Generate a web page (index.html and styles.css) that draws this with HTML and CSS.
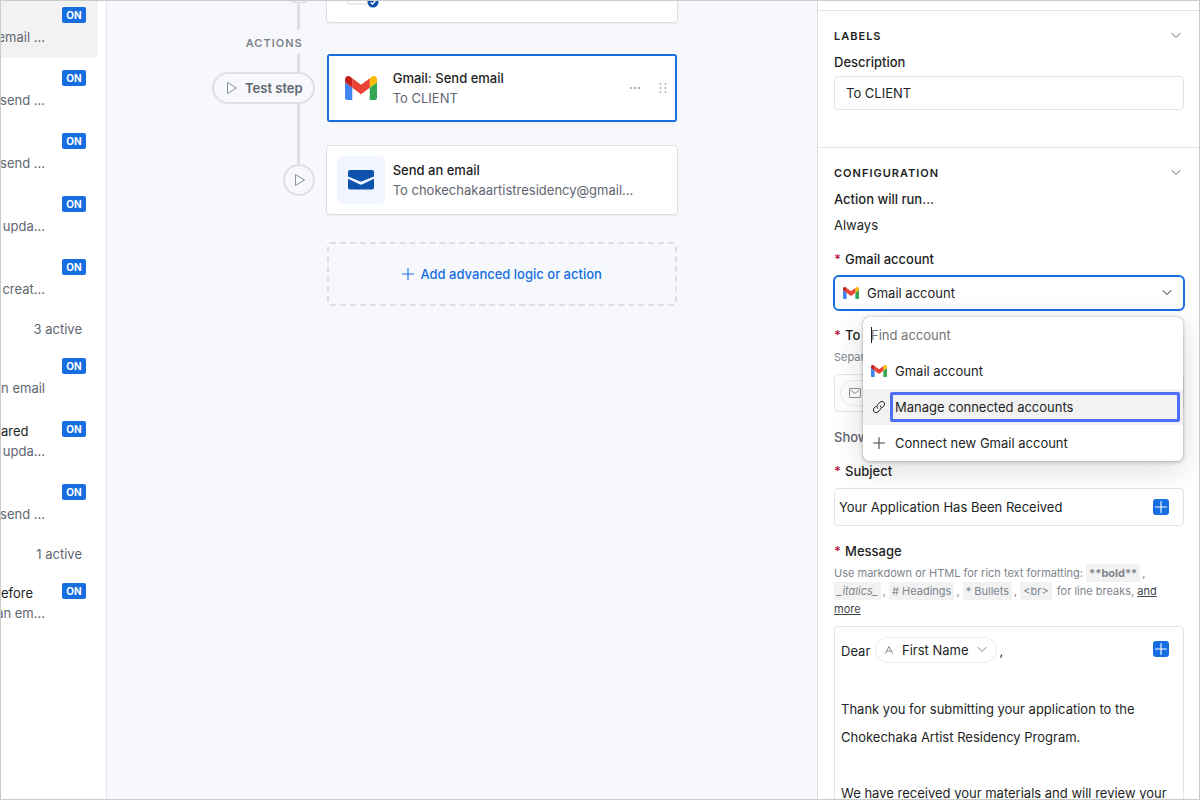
FILE: index.html
```html
<!DOCTYPE html>
<html lang="en">
<head>
    <meta charset="utf-8">
    <title>Automations</title>
    <meta name="viewport" content="width=device-width, initial-scale=1.0">
    <link rel="stylesheet" href="styles.css">
</head>
<body>
    <!-- shared icons -->
    <svg class="sprite" aria-hidden="true">
        <symbol id="gmail" viewBox="52 42 88 66">
            <path fill="#4285f4" d="M58 108h14V74L52 59v43c0 3.32 2.69 6 6 6"/>
            <path fill="#34a853" d="M120 108h14c3.32 0 6-2.69 6-6V59l-20 15"/>
            <path fill="#fbbc04" d="M120 48v26l20-15v-8c0-7.42-8.47-11.65-14.4-7.2"/>
            <path fill="#ea4335" d="M72 74V48l24 18 24-18v26L96 92"/>
            <path fill="#c5221f" d="M52 51v8l20 15V48l-5.6-4.2c-5.94-4.45-14.4-.22-14.4 7.2"/>
        </symbol>
        <symbol id="chevron" viewBox="0 0 12 12">
            <path d="M2 3.500l4 4 4-4" fill="none" stroke="currentColor" stroke-linecap="round" stroke-linejoin="round"/>
        </symbol>
        <symbol id="plus" viewBox="0 0 14 14">
            <path d="M7 1.500v11M1.500 7h11" fill="none" stroke="currentColor" stroke-width="1.1" stroke-linecap="round"/>
        </symbol>
        <symbol id="play" viewBox="0 0 14 14">
            <path d="M3.500 1.500v11l9-5.500z" fill="none" stroke="currentColor" stroke-width=".9" stroke-linejoin="round"/>
        </symbol>
    </svg>

    <div class="app">
        <nav class="sidebar">
            <ul class="list">
                <li class="item selected"><span class="badge">ON</span><p class="desc">email ...</p></li>
                <li class="item"><span class="badge">ON</span><p class="desc">send ...</p></li>
                <li class="item"><span class="badge">ON</span><p class="desc">send ...</p></li>
                <li class="item"><span class="badge">ON</span><p class="desc">upda...</p></li>
                <li class="item"><span class="badge">ON</span><p class="desc">creat...</p></li>
            </ul>
            <p class="count">3 active</p>
            <ul class="list">
                <li class="item"><span class="badge">ON</span><p class="desc">an email</p></li>
                <li class="item"><p class="name">ared</p><span class="badge">ON</span><p class="desc">upda...</p></li>
                <li class="item"><span class="badge">ON</span><p class="desc">send ...</p></li>
            </ul>
            <p class="count">1 active</p>
            <ul class="list">
                <li class="item"><p class="name name-cut">before</p><span class="badge">ON</span><p class="desc">an em...</p></li>
            </ul>
        </nav>

        <main class="canvas">
            <div class="rail">
                <button class="round" type="button" aria-label="Test trigger"><svg class="icon14"><use href="#play"/></svg></button>
                <span class="line line-top"></span>
                <span class="rail-label">ACTIONS</span>
                <span class="line line-short"></span>
                <button class="pill" type="button"><svg class="icon14"><use href="#play"/></svg><span>Test step</span></button>
                <span class="line line-long"></span>
                <button class="round" type="button" aria-label="Test this step"><svg class="icon14"><use href="#play"/></svg></button>
            </div>

            <div class="steps">
                <div class="card trigger">
                    <svg class="tile-icon" viewBox="0 0 48 48">
                        <rect x="11" y="12" width="26" height="28" rx="2" fill="#fff" stroke="#d5d7db"/>
                        <circle cx="36" cy="38" r="5.500" fill="#0d52ac"/>
                        <path d="M33.500 38.500l2 1.500 3-3.500" fill="none" stroke="#fff" stroke-width="1.500"/>
                    </svg>
                </div>

                <div class="card active">
                    <div class="tile"><svg class="gmail-big"><use href="#gmail"/></svg></div>
                    <div class="card-text">
                        <h3>Gmail: Send email</h3>
                        <p>To CLIENT</p>
                    </div>
                    <button class="plain" type="button" aria-label="More options">
                        <svg class="icon14" viewBox="0 0 14 14" fill="#8f929b"><circle cx="3" cy="7" r="1"/><circle cx="7" cy="7" r="1"/><circle cx="11" cy="7" r="1"/></svg>
                    </button>
                    <button class="plain" type="button" aria-label="Drag step">
                        <svg class="icon14" viewBox="0 0 14 14" fill="#a5a8af"><circle cx="4.500" cy="3" r=".9"/><circle cx="9.500" cy="3" r=".9"/><circle cx="4.500" cy="7" r=".9"/><circle cx="9.500" cy="7" r=".9"/><circle cx="4.500" cy="11" r=".9"/><circle cx="9.500" cy="11" r=".9"/></svg>
                    </button>
                </div>

                <div class="card">
                    <div class="tile tile-blue">
                        <svg class="mail-big" viewBox="0 0 26 20" fill="#0d52ac">
                            <path d="M2 0h22a2 2 0 0 1 2 2v4.500L14.200 11.300a3 3 0 0 1-2.400 0L0 6.500V2a2 2 0 0 1 2-2z"/>
                            <path d="M0 8.800l11.500 5.400a3 3 0 0 0 3 0L26 8.800v8.700a2 2 0 0 1-2 2H2a2 2 0 0 1-2-2z"/>
                        </svg>
                    </div>
                    <div class="card-text">
                        <h3>Send an email</h3>
                        <p>To chokechakaartistresidency@gmail...</p>
                    </div>
                </div>

                <button class="add" type="button"><svg class="icon14"><use href="#plus"/></svg>Add advanced logic or action</button>
            </div>
        </main>

        <aside class="panel">
            <section class="section">
                <header class="section-head"><h2>LABELS</h2><svg class="icon12"><use href="#chevron"/></svg></header>
                <label class="label" for="description">Description</label>
                <input class="input" type="text" id="description" value="To CLIENT">
            </section>

            <section class="section">
                <header class="section-head"><h2>CONFIGURATION</h2><svg class="icon12"><use href="#chevron"/></svg></header>
                <p class="label">Action will run...</p>
                <p class="value">Always</p>

                <label class="label required" for="account">Gmail account</label>
                <div class="select-wrap">
                    <svg class="gmail-small"><use href="#gmail"/></svg>
                    <select id="account">
                        <option>Gmail account</option>
                    </select>
                    <svg class="icon12"><use href="#chevron"/></svg>

                    <div class="menu">
                        <input class="menu-search" type="text" placeholder="Find account" aria-label="Find account">
                        <span class="caret"></span>
                        <button class="menu-item" type="button"><svg class="gmail-small"><use href="#gmail"/></svg><span>Gmail account</span></button>
                        <button class="menu-item hover" type="button">
                            <svg class="icon16" viewBox="0 0 16 16" fill="none" stroke="#1d1f25" stroke-linecap="round">
                                <path d="M6.600 9.400a2.700 2.700 0 0 1 0-3.800l2.600-2.600a2.700 2.700 0 0 1 3.800 3.800l-1.700 1.700"/>
                                <path d="M9.400 6.600a2.700 2.700 0 0 1 0 3.800l-2.600 2.600a2.700 2.700 0 0 1-3.800-3.800l1.700-1.700"/>
                            </svg>
                            <span class="focus-box">Manage connected accounts</span>
                        </button>
                        <button class="menu-item" type="button"><svg class="icon16 icon-dark"><use href="#plus"/></svg><span>Connect new Gmail account</span></button>
                    </div>
                </div>

                <p class="label required">To</p>
                <p class="hint">Separate by commas</p>
                <div class="box to-box">
                    <span class="token">
                        <svg class="mail-small" viewBox="0 0 12 10" fill="none" stroke="#8f929b"><rect x=".5" y=".5" width="11" height="9" rx=".5"/><path d="M1.500 2l4.500 3.500L10.500 2"/></svg>
                    </span>
                </div>

                <p class="show">Show more options</p>

                <label class="label required" for="subject">Subject</label>
                <div class="box subject-box">
                    <input type="text" id="subject" value="Your Application Has Been Received">
                    <button class="insert" type="button" aria-label="Insert value"><svg class="icon14"><use href="#plus"/></svg></button>
                </div>

                <p class="label required" id="message-label">Message</p>
                <p class="hint">Use markdown or HTML for rich text formatting: <code><b>**bold**</b></code>, <code><i>_italics_</i></code>, <code># Headings</code>, <code>* Bullets</code>, <code>&lt;br&gt;</code> for line breaks, <a href="#">and more</a></p>
                <div class="box message-box">
                    <div class="editor" contenteditable="true" role="textbox" aria-multiline="true" aria-labelledby="message-label">
                        <p class="greeting">Dear <span class="token token-name" contenteditable="false"><svg class="icon12" viewBox="0 0 12 12" fill="none" stroke="currentColor" stroke-width=".9" stroke-linecap="round"><path d="M2.500 9.500l3.500-7 3.500 7M3.800 7h4.400"/></svg>First Name<svg class="icon12"><use href="#chevron"/></svg></span>,</p>
                        <p><br></p>
                        <p>Thank you for submitting your application to the Chokechaka Artist Residency Program.</p>
                        <p><br></p>
                        <p>We have received your materials and will review your</p>
                    </div>
                    <button class="insert insert-over" type="button" aria-label="Insert value"><svg class="icon14"><use href="#plus"/></svg></button>
                </div>
            </section>
        </aside>
    </div>
</body>
</html>
```

FILE: styles.css
```css
* {
    box-sizing: border-box;
}
body {
    margin: 0;
    font-family: Inter, "Liberation Sans", sans-serif;
    font-size: 13px;
    line-height: 20px;
    color: #1d1f25;
}
h2, h3, p, ul {
    margin: 0;
    padding: 0;
}
button, input, select {
    font: inherit;
    color: inherit;
    margin: 0;
    padding: 0;
    border: 0;
    background: none;
    outline: none;
}
svg {
    display: block;
    flex: none;
}
.sprite {
    display: none;
}
.icon12 {
    width: 12px;
    height: 12px;
}
.icon14 {
    width: 14px;
    height: 14px;
}
.icon16 {
    width: 16px;
    height: 16px;
}

.app {
    display: grid;
    grid-template-columns: 106px 1fr 382px;
    height: 100vh;
    border: 1px solid #cbcbcb;
    overflow: hidden;
}

/* automation list */
.sidebar {
    border-right: 1px solid #e3e4e7;
    background: #fff;
    color: #616670;
    overflow: hidden;
}
.list {
    list-style: none;
}
.item {
    display: grid;
    grid-template-columns: 44px 24px;
    column-gap: 17px;
    grid-template-rows: 20px 20px;
    height: 62px;
    margin: 0 8px 1px 0;
    padding-top: 11px;
}
.item.selected {
    margin-top: -5px;
    background: #f2f2f2;
    border-radius: 0 6px 6px 0;
}
.name {
    grid-column: 1;
    grid-row: 1;
    color: #1d1f25;
}
.name-cut {
    margin-left: -8px;
}
.badge {
    grid-column: 2;
    grid-row: 1;
    height: 16px;
    border-radius: 2px;
    background: #166ee1;
    color: #fff;
    font-size: 10px;
    font-weight: 700;
    line-height: 16px;
    text-align: center;
}
.desc {
    grid-column: 1;
    grid-row: 2;
    display: flex;
    justify-content: flex-end;
    white-space: nowrap;
}
.count {
    padding: 8px 24px 8px 0;
    text-align: right;
}

/* workflow */
.canvas {
    display: flex;
    align-items: flex-start;
    gap: 11px;
    padding-left: 105px;
    padding-right: 24px;
    background: #f6f8fc;
    overflow: hidden;
}
.rail {
    display: flex;
    flex-direction: column;
    align-items: flex-end;
    margin-top: -29px;
    color: #616670;
}
.round, .pill {
    display: flex;
    align-items: center;
    justify-content: center;
    height: 32px;
    border: 2px solid #dddfe3;
    border-radius: 16px;
}
.round {
    width: 32px;
}
.pill {
    gap: 7px;
    padding: 0 10px;
    font-weight: 600;
}
.rail svg {
    color: #80848d;
}
.line {
    width: 3px;
    margin-right: 15px;
    background: #dddfe3;
}
.line-top {
    height: 26px;
}
.line-short {
    height: 18px;
}
.line-long {
    height: 60px;
}
.rail-label {
    height: 24px;
    margin-right: 12px;
    font-size: 11px;
    font-weight: 600;
    line-height: 26px;
    letter-spacing: 1px;
    color: #80848d;
}
.steps {
    display: flex;
    flex-direction: column;
    flex: 1;
    max-width: 352px;
    margin-top: -49px;
}
.card {
    display: flex;
    align-items: center;
    height: 70px;
    padding: 0 10px;
    background: #fff;
    border: 1px solid #dddfe3;
    border-radius: 4px;
    box-shadow: 0 1px 2px rgba(0, 0, 0, 0.05);
}
.card.trigger {
    height: 71px;
    margin-bottom: 31px;
}
.card.active {
    height: 68px;
    margin: 0 1px 23px;
    padding: 0 5px 0 8px;
    border: 2px solid #166ee1;
    border-radius: 3px;
}
.tile, .tile-icon {
    width: 48px;
    height: 48px;
}
.tile {
    display: flex;
    align-items: center;
    justify-content: center;
    border-radius: 6px;
}
.tile-blue {
    background: #f0f5ff;
}
.gmail-big {
    width: 32px;
    height: 24px;
}
.mail-big {
    width: 26px;
    height: 20px;
}
.card-text {
    flex: 1;
    min-width: 0;
    margin-left: 8px;
    color: #616670;
}
.card-text h3 {
    font-size: 13px;
    font-weight: 500;
    color: #1d1f25;
}
.plain {
    margin-left: 14px;
}
.add {
    display: flex;
    align-items: center;
    justify-content: center;
    gap: 5px;
    height: 64px;
    margin: 27px 1px 0;
    border: 2px dashed #dddfe3;
    border-radius: 3px;
    color: #166ee1;
    font-weight: 500;
}

/* settings panel */
.panel {
    padding-top: 9px;
    border-left: 1px solid #dddfe3;
    background: #fff;
    overflow: hidden;
}
.section {
    padding: 15px 15px 37px 16px;
    border-top: 1px solid #e3e4e7;
}
.section-head {
    display: flex;
    align-items: center;
    justify-content: space-between;
    margin-bottom: 6px;
    padding-right: 2px;
}
.section-head svg {
    color: #616670;
}
.section-head h2 {
    font-size: 11px;
    font-weight: 600;
    line-height: 20px;
    letter-spacing: 1px;
}
.label {
    display: block;
    font-weight: 500;
}
.required::before {
    content: "*";
    margin-right: 4px;
    color: #ba1b4b;
    font-weight: 600;
}
.value {
    margin: 6px 0 14px;
}
.input {
    width: 100%;
    height: 34px;
    margin-top: 4px;
    padding: 0 11px;
    border: 1px solid #e3e4e7;
    border-radius: 4px;
}
.select-wrap {
    position: relative;
    display: flex;
    align-items: center;
    gap: 8px;
    height: 36px;
    margin: 6px -1px 14px;
    padding: 0 10px 0 8px;
    border: 2px solid #166ee1;
    border-radius: 6px;
}
.select-wrap select {
    flex: 1;
    height: 32px;
    appearance: none;
}
.gmail-small {
    width: 16px;
    height: 12px;
}

.menu {
    position: absolute;
    top: 40px;
    left: 28px;
    right: 0;
    z-index: 2;
    background: #fff;
    border-radius: 6px;
    box-shadow: 0 0 1px rgba(0, 0, 0, 0.4), 0 1px 4px rgba(0, 0, 0, 0.24), 0 8px 32px rgba(0, 0, 0, 0.14);
    overflow: hidden;
}
.menu-search {
    display: block;
    width: 100%;
    height: 36px;
    padding: 0 8px;
}
.menu-search::placeholder {
    color: #757575;
}
.caret {
    position: absolute;
    top: 10px;
    left: 8px;
    width: 1px;
    height: 16px;
    background: #1d1f25;
}
.menu-item {
    display: flex;
    align-items: center;
    gap: 8px;
    width: 100%;
    height: 36px;
    padding: 0 3px 0 8px;
    text-align: left;
}
.menu-item.hover {
    background: #f2f2f2;
}
.focus-box {
    flex: 1;
    margin-left: -5px;
    padding: 2px;
    border: 3px solid #4f6ef7;
    border-radius: 2px;
}
.icon-dark {
    padding: 1px;
    color: #40444d;
}

.hint {
    margin-top: 3px;
    font-size: 11px;
    line-height: 18px;
    color: #80848d;
}
.hint code {
    display: inline-block;
    margin-right: 2px;
    padding: 0 3px;
    background: #f2f2f2;
    font-family: inherit;
    font-size: 11px;
    vertical-align: top;
}
.hint a {
    color: #40444d;
}
.box {
    display: flex;
    margin-top: 8px;
    border: 1px solid #e3e4e7;
    border-radius: 4px;
}
.token {
    display: inline-flex;
    align-items: center;
    height: 26px;
    border: 1px solid #ececee;
    border-radius: 13px;
}
.to-box {
    height: 38px;
    padding: 5px;
}
.to-box .token {
    width: 120px;
    padding-left: 8px;
}
.mail-small {
    width: 12px;
    height: 10px;
}
.show {
    margin: 15px 0 14px;
    color: #616670;
    font-weight: 500;
}
.subject-box {
    align-items: center;
    height: 38px;
    margin: 7px 0 15px;
    padding: 0 14px 0 4px;
}
.subject-box input {
    flex: 1;
    height: 34px;
}
.insert {
    display: flex;
    align-items: center;
    justify-content: center;
    width: 16px;
    height: 16px;
    border-radius: 3px;
    background: #166ee1;
    color: #fff;
}
.message-box {
    position: relative;
    padding: 10px 6px;
}
.insert-over {
    position: absolute;
    top: 14px;
    right: 14px;
}
.editor {
    flex: 1;
    line-height: 28px;
    outline: none;
}
.greeting {
    height: 30px;
}
.token-name {
    gap: 7px;
    margin: 0 3px 0 1px;
    padding: 0 8px 0 7px;
    line-height: 20px;
}
.token-name svg {
    color: #80848d;
}
```
